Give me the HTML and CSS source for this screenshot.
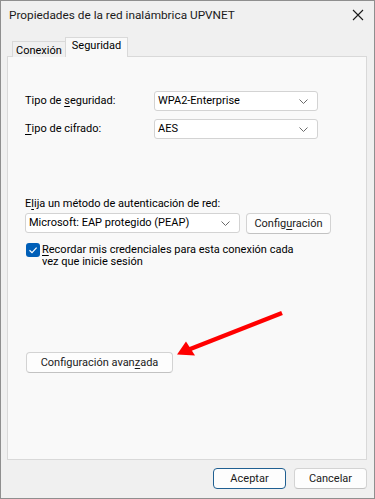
FILE: index.html
```html
<!DOCTYPE html>
<html lang="es">
<head>
<meta charset="utf-8">
<title>Propiedades de la red inalámbrica UPVNET</title>
<link rel="stylesheet" href="styles.css">
</head>
<body>
<div class="window">
  <div class="titlebar">
    <span class="title">Propiedades de la red inalámbrica UPVNET</span>
    <svg class="close" width="12" height="12" viewBox="0 0 12 12"><path d="M1 1 L11 11 M11 1 L1 11" stroke="#1a1a1a" stroke-width="1.1" fill="none"/></svg>
  </div>
  <div class="tabs">
    <div class="tab">Conexión</div>
    <div class="tab active">Seguridad</div>
  </div>
  <div class="panel">
    <div class="grid">
      <label class="lbl">Tipo de <u>s</u>eguridad:</label>
      <div class="select w164"><span>WPA2-Enterprise</span><svg class="chev" width="9" height="5" viewBox="0 0 9 5"><path d="M0.5 0.5 L4.5 4.5 L8.5 0.5" stroke="#6a6a6a" fill="none" stroke-width="1"/></svg></div>
      <label class="lbl"><u>T</u>ipo de cifrado:</label>
      <div class="select w164"><span>AES</span><svg class="chev" width="9" height="5" viewBox="0 0 9 5"><path d="M0.5 0.5 L4.5 4.5 L8.5 0.5" stroke="#6a6a6a" fill="none" stroke-width="1"/></svg></div>
    </div>
    <div class="auth-label">E<u>l</u>ija un método de autenticación de red:</div>
    <div class="auth-row">
      <div class="select w215"><span>Microsoft: EAP protegido (PEAP)</span><svg class="chev" width="9" height="5" viewBox="0 0 9 5"><path d="M0.5 0.5 L4.5 4.5 L8.5 0.5" stroke="#6a6a6a" fill="none" stroke-width="1"/></svg></div>
      <button class="btn w85">Config<u>u</u>ración</button>
    </div>
    <div class="check-row">
      <span class="checkbox"><svg width="14" height="14" viewBox="0 0 14 14"><path d="M3.5 7.2 L6 9.6 L10.6 4.6" stroke="#fff" stroke-width="1.2" fill="none"/></svg></span>
      <span class="check-text"><u>R</u>ecordar mis credenciales para esta conexión cada<br>vez que inicie sesión</span>
    </div>
    <button class="btn adv">Configuración avan<u>z</u>ada</button>
  </div>
  <div class="footer">
    <button class="btn fbtn default">Aceptar</button>
    <button class="btn fbtn">Cancelar</button>
  </div>
  <svg class="arrow" width="120" height="60" viewBox="170 305 120 60">
    <line x1="282" y1="313" x2="189" y2="349.5" stroke="#ff0000" stroke-width="4.5" stroke-linecap="butt"/>
    <polygon points="177,354.5 186,341.5 195,355.5" fill="#ff0000"/>
  </svg>
</div>
</body>
</html>
```
FILE: styles.css
```css
* { box-sizing: border-box; }
html, body { margin: 0; padding: 0; background: #f0f0f0; }
.window {
  position: relative;
  width: 375px;
  height: 499px;
  border: 1px solid #8f8f8f;
  background: #f0f0f0;
  display: flex;
  flex-direction: column;
  font-family: Roboto, "Noto Sans", sans-serif;
  font-size: 11px;
  color: #000;
}
u { text-decoration-thickness: 1px; text-underline-offset: 2px; }
.titlebar {
  height: 28px;
  display: flex;
  align-items: center;
  justify-content: space-between;
  padding: 0 10px 0 8px;
}
.title { font-size: 11.8px; line-height: 16px; color: #1a1a1a; }
.tabs {
  height: 28px;
  display: flex;
  align-items: flex-end;
  padding-left: 11px;
  margin-bottom: -1px;
  position: relative;
  z-index: 1;
}
.tab {
  height: 16px;
  padding: 2px 3px 0 3px;
  border: 1px solid #d9d9d9;
  border-bottom: none;
  border-right: none;
  background: #f0f0f0;
  line-height: 14px;
}
.tab.active {
  height: 20px;
  padding: 1px 6px 0 6px;
  background: #f9f9f9;
  border-right: 1px solid #d9d9d9;
}
.panel {
  height: 404px;
  margin: 0 7px 0 6px;
  border: 1px solid #d9d9d9;
  background: #f9f9f9;
  padding: 34px 0 0 17px;
}
.grid {
  display: grid;
  grid-template-columns: 129px 164px;
  row-gap: 8px;
  align-items: center;
}
.lbl { line-height: 16px; }
.select {
  height: 20px;
  border: 1px solid #d3d3d3;
  border-radius: 3px;
  background: #fff;
  display: flex;
  align-items: center;
  justify-content: space-between;
  padding: 0 9px 0 3px;
  line-height: 16px;
}
.w164 { width: 164px; }
.w215 { width: 215px; }
.chev { flex: none; }
.auth-label { margin-top: 57px; line-height: 16px; }
.auth-row { display: flex; gap: 6px; margin-top: 1px; }
.btn {
  font: inherit;
  color: #1a1a1a;
  height: 21px;
  background: #fdfdfd;
  border: 1px solid #d3d3d3;
  border-bottom-color: #c2c2c2;
  border-radius: 4px;
  padding: 0;
  line-height: 16px;
}
.w85 { width: 85px; }
.check-row { display: flex; margin-top: 9px; margin-left: 1px; gap: 2px; }
.checkbox {
  width: 14px;
  height: 14px;
  border-radius: 3px;
  background: #005fb8;
  display: block;
  flex: none;
}
.checkbox svg { display: block; }
.check-text { line-height: 12px; margin-top: 1px; }
.adv { display: block; width: 147px; margin-top: 84px; margin-left: 1px; }
.footer {
  display: flex;
  justify-content: flex-end;
  gap: 8px;
  padding: 8px 7px 0 0;
}
.fbtn { width: 73px; }
.fbtn.default { border: 1px solid #1f5f91; }
.arrow { position: absolute; left: 169px; top: 304px; }
```
